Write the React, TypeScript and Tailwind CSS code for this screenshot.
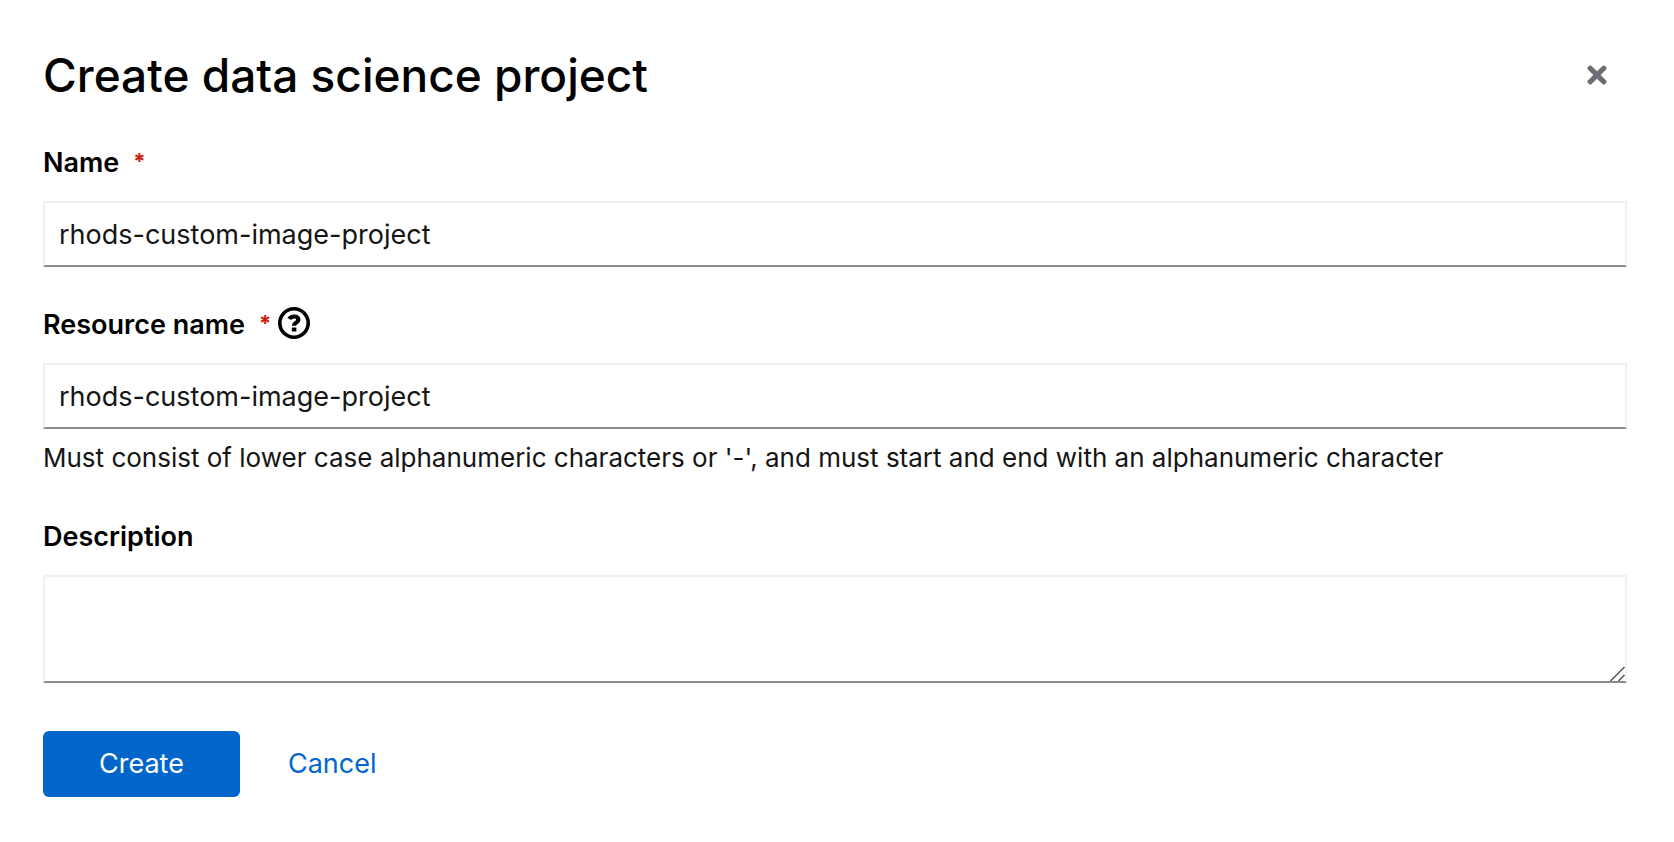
import { type ReactNode, useState } from "react";

const controlClass =
  "block w-full rounded-none border-2 border-[#f0f0f0] border-b-[#8a8d90] bg-white px-3.5 text-[27px] text-[#151515] outline-none focus:border-b-[#0066cc]";

function FieldLabel({ htmlFor, required, children }: { htmlFor: string; required?: boolean; children: ReactNode }) {
  return (
    <label htmlFor={htmlFor} className="flex text-[27px] leading-9 font-semibold text-black">
      {children}
      {required && (
        <span aria-hidden="true" className="ml-3.5 text-[22px] leading-8 font-bold text-[#c9190b]">
          *
        </span>
      )}
    </label>
  );
}

function CloseIcon() {
  return (
    <svg viewBox="0 0 352 512" className="h-7 w-5" fill="currentColor" aria-hidden="true">
      <path d="M242.72 256l100.07-100.07c12.28-12.28 12.28-32.19 0-44.48l-22.24-22.24c-12.28-12.28-32.19-12.28-44.48 0L176 189.28 75.93 89.21c-12.28-12.28-32.19-12.28-44.48 0L9.21 111.45c-12.28 12.28-12.28 32.19 0 44.48L109.28 256 9.21 356.07c-12.28 12.28-12.28 32.19 0 44.48l22.24 22.24c12.28 12.28 32.2 12.28 44.48 0L176 322.72l100.07 100.07c12.28 12.28 32.2 12.28 44.48 0l22.24-22.24c12.28-12.28 12.28-32.19 0-44.48L242.72 256z" />
    </svg>
  );
}

function HelpIcon() {
  return (
    <svg viewBox="0 0 32 32" className="size-8" fill="none" aria-hidden="true">
      <circle cx="16" cy="16" r="14.2" stroke="currentColor" strokeWidth="3.6" />
      <path
        d="M11.2 12.1C12.2 10.3 13.8 9.5 16.1 9.5C18.9 9.5 20.4 10.9 20.4 12.9C20.4 15.6 16 15.4 16 18.8"
        stroke="currentColor"
        strokeWidth="4.2"
      />
      <rect x="13.8" y="20.4" width="4.6" height="4.2" rx="0.6" fill="currentColor" />
    </svg>
  );
}

function ResizeGrip() {
  return (
    <svg
      viewBox="0 0 16 16"
      className="pointer-events-none absolute right-0.5 bottom-0.5 size-4 text-[#555555]"
      fill="none"
      aria-hidden="true"
    >
      <path d="M1.5 16L15.5 2M9.5 16L15.5 10" stroke="currentColor" strokeWidth="1.5" />
    </svg>
  );
}

export default function App() {
  const [name, setName] = useState("rhods-custom-image-project");
  const [resourceName, setResourceName] = useState("rhods-custom-image-project");
  const [description, setDescription] = useState("");

  return (
    <main
      role="dialog"
      aria-labelledby="dialog-title"
      className="min-h-screen bg-white pt-11 pr-[47px] pb-11 pl-[43px] font-['Inter',sans-serif] text-[#151515]"
    >
      <header className="flex items-center justify-between">
        <h1 id="dialog-title" className="text-[46px] leading-[62px] font-medium text-black">
          Create data science project
        </h1>
        <button type="button" aria-label="Close" className="mr-1 flex size-[52px] items-center justify-center text-[#6a6e73]">
          <CloseIcon />
        </button>
      </header>

      <form onSubmit={(event) => event.preventDefault()} className="mt-[39px] flex flex-col">
        <div>
          <FieldLabel htmlFor="project-name" required>
            Name
          </FieldLabel>
          <input
            id="project-name"
            type="text"
            required
            value={name}
            onChange={(event) => setName(event.target.value)}
            className={`${controlClass} mt-5 h-[66px]`}
          />
        </div>

        <div className="mt-10">
          <div className="flex">
            <FieldLabel htmlFor="resource-name" required>
              Resource name
            </FieldLabel>
            <button type="button" aria-label="More info about resource name" className="ml-[7px] size-8 text-black">
              <HelpIcon />
            </button>
          </div>
          <input
            id="resource-name"
            type="text"
            required
            aria-describedby="resource-name-help"
            value={resourceName}
            onChange={(event) => setResourceName(event.target.value)}
            className={`${controlClass} mt-5 h-[66px]`}
          />
          <p id="resource-name-help" className="mt-2 text-[26px] leading-[42px]">
            Must consist of lower case alphanumeric characters or '-', and must start and end with an alphanumeric
            character
          </p>
        </div>

        <div className="mt-10">
          <FieldLabel htmlFor="description">Description</FieldLabel>
          <div className="relative mt-5">
            <textarea
              id="description"
              value={description}
              onChange={(event) => setDescription(event.target.value)}
              className={`${controlClass} h-[108px] resize-y [&::-webkit-resizer]:bg-transparent`}
            />
            <ResizeGrip />
          </div>
        </div>

        <div className="mt-12 flex gap-4">
          <button type="submit" className="h-[66px] rounded-md bg-[#0066cc] px-14 text-[27px] text-white">
            Create
          </button>
          <button type="button" className="h-[66px] px-8 text-[27px] text-[#0066cc]">
            Cancel
          </button>
        </div>
      </form>
    </main>
  );
}
